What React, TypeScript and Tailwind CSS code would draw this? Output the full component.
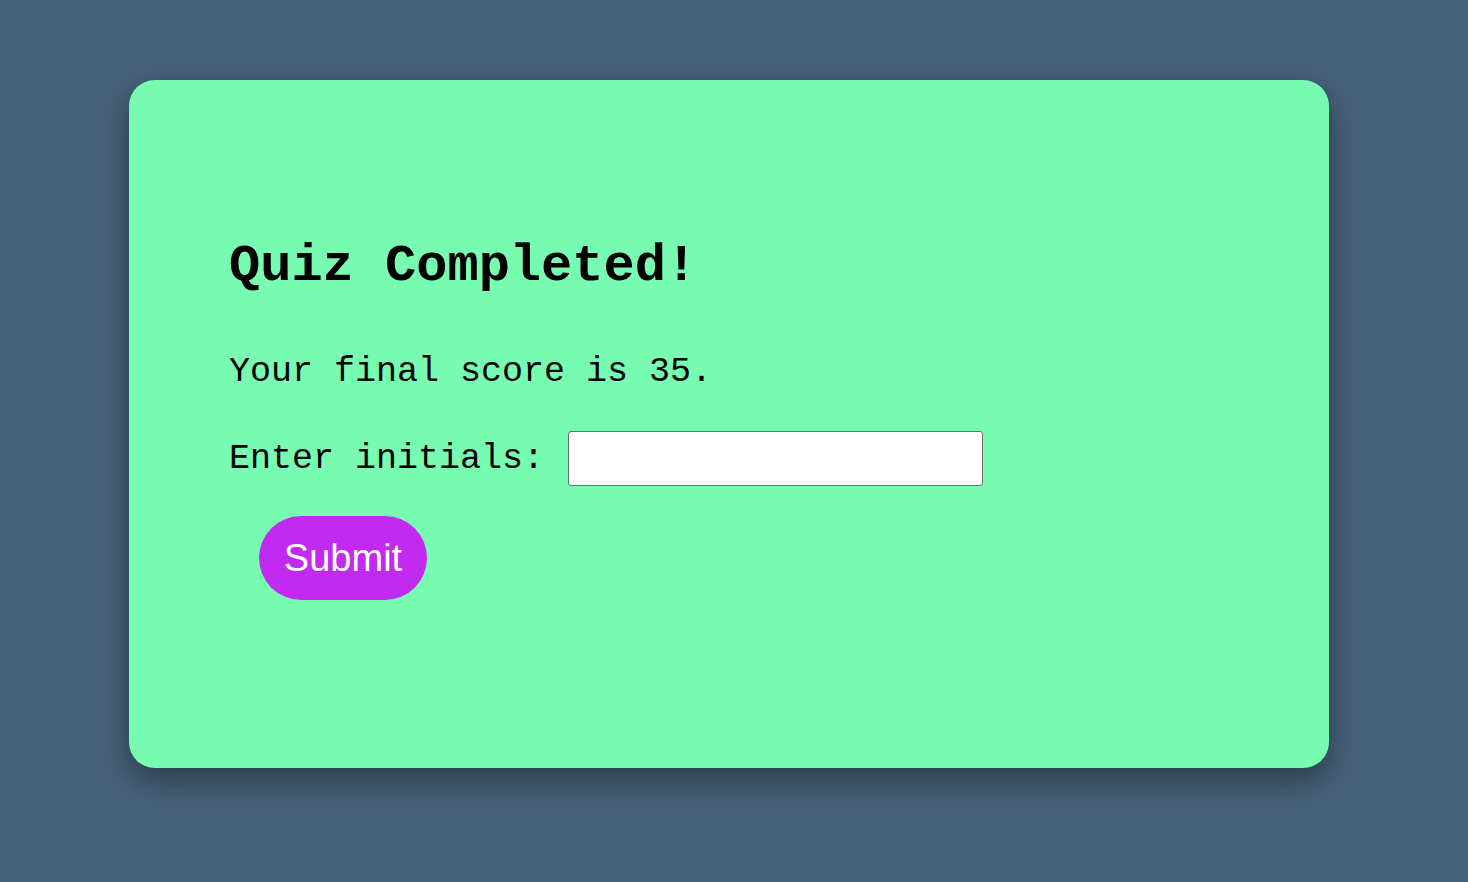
export default function App() {
  return (
    <div className="min-h-[882px] bg-[#46627a] pt-[80px] pl-[129px]">
      <div className="w-[1200px] h-[688px] rounded-[26px] bg-[#77fcb1] shadow-[0_12px_32px_rgba(0,0,0,0.4)] pl-[100px] pt-[147px] font-['Liberation_Mono',monospace] text-black">
        <h1 className="text-[52px] leading-[80px] font-bold">Quiz Completed!</h1>
        <p className="mt-[43px] text-[35px] leading-[44px]">Your final score is 35.</p>
        <div className="mt-[37px] flex items-center">
          <label className="text-[35px] leading-[44px]">Enter initials:</label>
          <input
            type="text"
            className="ml-[24px] w-[415px] h-[55px] bg-white border border-[#6f6f6f] rounded-[3px] px-2 text-[24px]"
          />
        </div>
        <button className="mt-[30px] ml-[30px] w-[168px] h-[84px] rounded-full bg-[#c22af1] text-white text-[38px] font-['Liberation_Sans',Arial,sans-serif]">
          Submit
        </button>
      </div>
    </div>
  );
}
